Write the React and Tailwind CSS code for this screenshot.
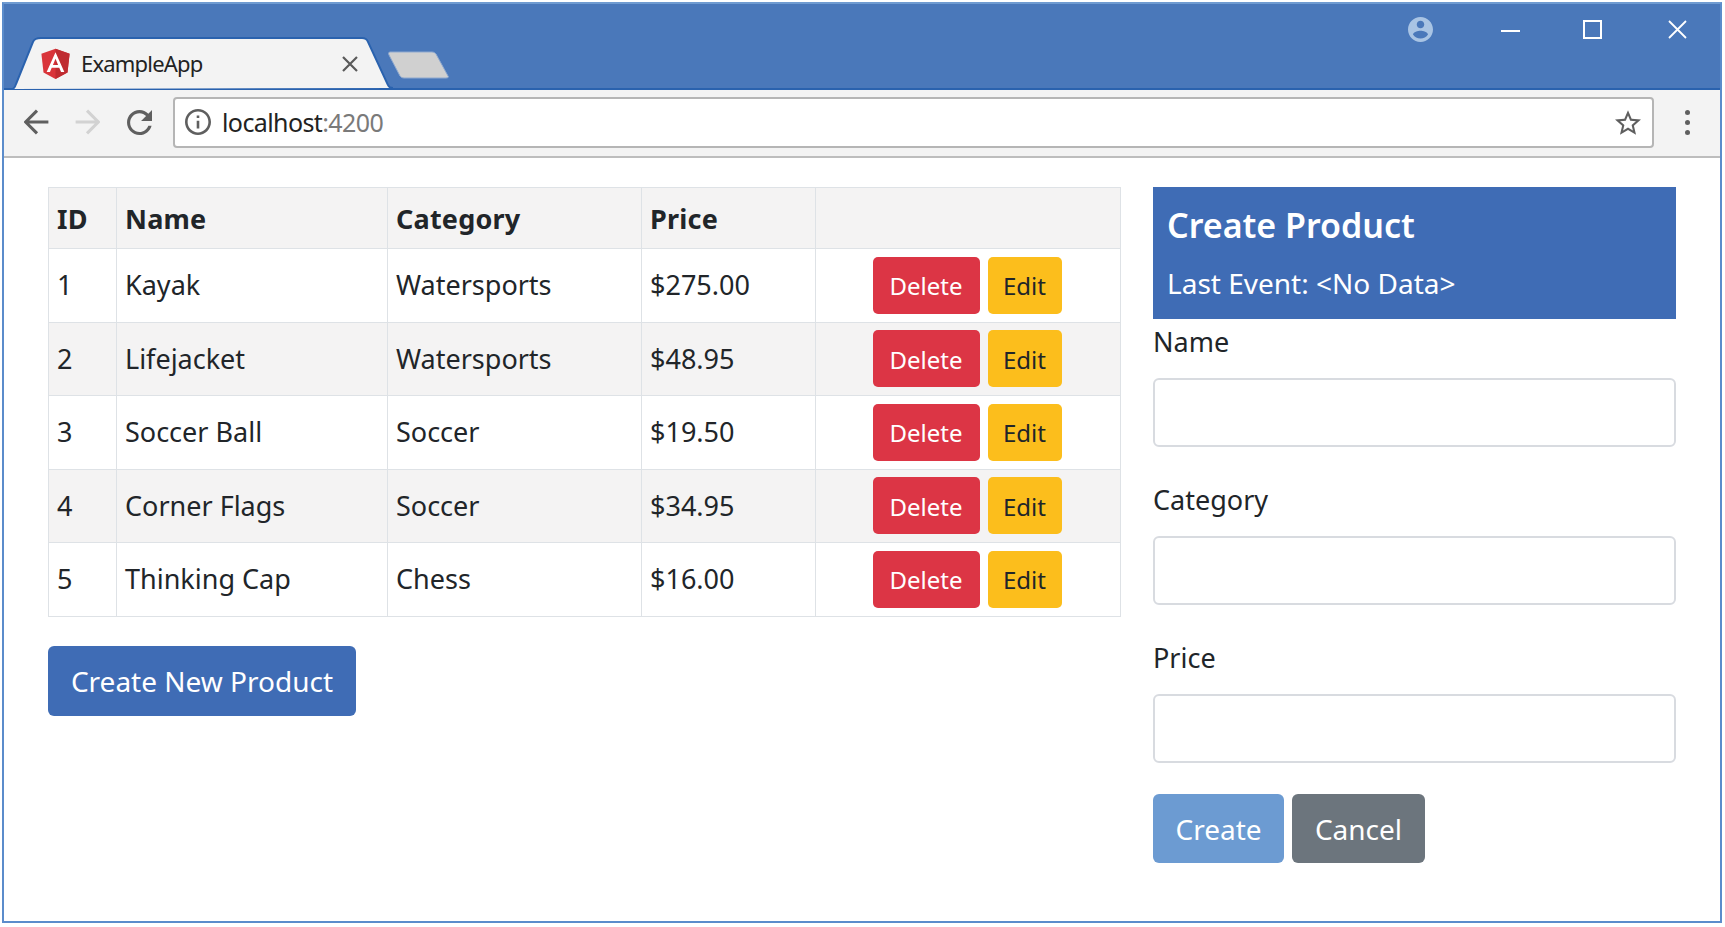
const products = [
    { id: 1, name: 'Kayak', category: 'Watersports', price: '$275.00' },
    { id: 2, name: 'Lifejacket', category: 'Watersports', price: '$48.95' },
    { id: 3, name: 'Soccer Ball', category: 'Soccer', price: '$19.50' },
    { id: 4, name: 'Corner Flags', category: 'Soccer', price: '$34.95' },
    { id: 5, name: 'Thinking Cap', category: 'Chess', price: '$16.00' },
];

const AngularLogo = () => (
    <svg viewBox="15 8 220 235" className="w-[29px] h-[32px] shrink-0">
        <polygon fill="#d9343a" points="125,10 18,48 34,190 125,240 216,190 232,48" />
        <polygon fill="#bf2b30" points="125,10 125,240 216,190 232,48" />
        <path fill="#fff" d="M125 37 58 187h25l13.500-33.500h57L167 187h25L125 37zm19.600 96h-39.200L125 86l19.600 47z" />
    </svg>
);

const TitleBar = () => (
    <div className="flex h-[86px] shrink-0 bg-[#4a78ba] border-b-2 border-[#2a62ae] pl-[8px]">
        <div className="relative self-end w-[382px] h-[53px] -mb-[2px] flex items-center pl-[29px] pr-[36px]">
            <svg viewBox="0 0 382 53" className="absolute inset-0 w-full h-full">
                <path d="M0 52 C2 52 3 50 4 47 L21 5 C22 2 25 1 29 1 H350 C353 1 355 2 356 5 L376 48 C377 51 379 51 381 51" fill="#f3f3f3" stroke="#2a62ae" strokeWidth="2" />
            </svg>
            <div className="relative flex items-center w-full">
                <AngularLogo />
                <span className="ml-[11px] text-[22px] text-[#222] tracking-[-0.8px]">ExampleApp</span>
                <svg viewBox="0 0 16 16" className="ml-auto w-[16px] h-[16px]" stroke="#5a5a5a" strokeWidth="2.200">
                    <path d="M1 1 15 15M15 1 1 15" />
                </svg>
            </div>
        </div>
        <div className="self-end mb-[9px] -ml-[6px]">
            <svg viewBox="0 0 62 29" className="w-[62px] h-[29px]">
                <path d="M2 2 H44 C46 2 47 3 48 4 L60 26 C61 27 60 28 58 28 H16 C14 28 13 27 12 26 L1 5 C0 3 1 2 2 2Z" fill="#d0d0d0" stroke="#8fa9cf" strokeWidth="1" />
            </svg>
        </div>
        <div className="ml-auto flex items-start pt-[13px] pr-[33px]">
            <svg viewBox="2 2 20 20" className="w-[25px] h-[25px] mr-[68px]" fill="#a9c4e4">
                <path d="M12 2C6.480 2 2 6.480 2 12s4.480 10 10 10 10-4.480 10-10S17.520 2 12 2zm0 3c1.660 0 3 1.340 3 3s-1.340 3-3 3-3-1.340-3-3 1.340-3 3-3zm0 14.200c-2.500 0-4.710-1.280-6-3.220.030-1.990 4-3.080 6-3.080 1.990 0 5.970 1.090 6 3.080-1.290 1.940-3.500 3.220-6 3.220z" />
            </svg>
            <div className="w-[19px] h-[2px] bg-white mt-[13px] mr-[63px]" />
            <div className="w-[19px] h-[19px] border-2 border-white mt-[3px] mr-[66px]" />
            <svg viewBox="0 0 19 19" className="w-[19px] h-[19px] mt-[3px]" stroke="#fff" strokeWidth="1.800">
                <path d="M1 1 18 18M18 1 1 18" />
            </svg>
        </div>
    </div>
);

const Toolbar = () => (
    <div className="flex items-center h-[68px] shrink-0 bg-[#f3f3f3] border-b-2 border-[#bdbdbd] pl-[20px] pb-[2px]">
        <svg viewBox="4 4 16 16" className="w-[26px] h-[26px]" fill="none" stroke="#5f5f5f" strokeWidth="1.900">
            <path d="M19 12H5M12 19l-7-7 7-7" />
        </svg>
        <svg viewBox="4 4 16 16" className="w-[26px] h-[26px] ml-[24px]" fill="none" stroke="#d2d2d2" strokeWidth="1.900">
            <path d="M5 12h14M12 5l7 7-7 7" />
        </svg>
        <svg viewBox="4 4 16 16" className="w-[25px] h-[25px] ml-[27px]" fill="#5f5f5f">
            <path d="M17.650 6.350C16.200 4.900 14.210 4 12 4c-4.420 0-7.990 3.580-7.990 8s3.570 8 7.990 8c3.730 0 6.840-2.550 7.730-6h-2.080c-.82 2.330-3.040 4-5.650 4-3.310 0-6-2.690-6-6s2.690-6 6-6c1.660 0 3.140.69 4.220 1.780L13 11h7V4l-2.350 2.350z" />
        </svg>
        <div className="flex items-center w-[1481px] h-[51px] ml-[21px] bg-white border-2 border-[#b5b5b5] rounded-[4px] pl-[10px] pr-[11px]">
            <svg viewBox="2 2 20 20" className="w-[26px] h-[26px]" fill="#5f5f5f">
                <path d="M11 7h2v2h-2zm0 4h2v6h-2zm1-9C6.480 2 2 6.480 2 12s4.480 10 10 10 10-4.480 10-10S17.520 2 12 2zm0 18c-4.410 0-8-3.590-8-8s3.590-8 8-8 8 3.590 8 8-3.590 8-8 8z" />
            </svg>
            <span className="ml-[11px] pt-[2px] text-[25px] text-[#222] tracking-[-0.6px]">
                localhost<span className="text-[#7a7a7a]">:4200</span>
            </span>
            <svg viewBox="2 2 20 19" className="ml-auto w-[26px] h-[25px]" fill="#5f5f5f">
                <path d="M22 9.240l-7.190-.62L12 2 9.190 8.630 2 9.240l5.460 4.730L5.820 21 12 17.270 18.180 21l-1.630-7.030L22 9.240zM12 15.400l-3.760 2.270 1-4.280-3.320-2.880 4.380-.38L12 6.100l1.710 4.040 4.380.38-3.320 2.880 1 4.280L12 15.400z" />
            </svg>
        </div>
        <div className="flex flex-col gap-[5px] ml-[31px]">
            <div className="w-[5px] h-[5px] rounded-full bg-[#5f5f5f]" />
            <div className="w-[5px] h-[5px] rounded-full bg-[#5f5f5f]" />
            <div className="w-[5px] h-[5px] rounded-full bg-[#5f5f5f]" />
        </div>
    </div>
);

const ProductTable = () => (
    <table className="w-[1073px] table-fixed border border-[#dee2e6] text-[27px] text-[#212529]">
        <colgroup>
            <col className="w-[68px]" />
            <col className="w-[271px]" />
            <col className="w-[254px]" />
            <col className="w-[174px]" />
            <col />
        </colgroup>
        <thead>
            <tr className="h-[61px] bg-[#f4f3f3] font-bold text-left tracking-[0.2px]">
                <th className="border border-[#dee2e6] pl-[8px] pt-[2px]">ID</th>
                <th className="border border-[#dee2e6] pl-[8px] pt-[2px]">Name</th>
                <th className="border border-[#dee2e6] pl-[8px] pt-[2px]">Category</th>
                <th className="border border-[#dee2e6] pl-[8px] pt-[2px]">Price</th>
                <th className="border border-[#dee2e6]"></th>
            </tr>
        </thead>
        <tbody>
            {products.map((p, i) => (
                <tr key={p.id} className={i % 2 === 1 ? 'h-[73.500px] bg-[#f4f3f3]' : 'h-[73.500px] bg-white'}>
                    <td className="border border-[#dee2e6] pl-[8px]">{p.id}</td>
                    <td className="border border-[#dee2e6] pl-[8px]">{p.name}</td>
                    <td className="border border-[#dee2e6] pl-[8px]">{p.category}</td>
                    <td className="border border-[#dee2e6] pl-[8px]">{p.price}</td>
                    <td className="border border-[#dee2e6]">
                        <div className="flex justify-center gap-[8px] pr-[2px]">
                            <button className="w-[107px] h-[57px] pt-[2px] rounded-[5px] bg-[#dc3545] text-white text-[24px]">Delete</button>
                            <button className="w-[74px] h-[57px] pt-[2px] rounded-[5px] bg-[#fcbe1c] text-[#212529] text-[24px]">Edit</button>
                        </div>
                    </td>
                </tr>
            ))}
        </tbody>
    </table>
);

const Field = ({ label, last }) => (
    <div className={last ? 'flex flex-col' : 'flex flex-col mb-[33px]'}>
        <label className="text-[27px] leading-[40px] mb-[16px] text-[#212529]">{label}</label>
        <input className="w-full h-[69px] bg-white border-2 border-[#d8dbe0] rounded-[6px]" />
    </div>
);

export default function App() {
    return (
        <div className="w-[1725px] h-[927px] bg-white pt-[2px] pl-[2px] font-['Noto_Sans',sans-serif]">
            <div className="flex flex-col w-[1720px] h-[921px] border-2 border-[#5b8ccb] border-t-[#6f9bd1]">
                <TitleBar />
                <Toolbar />
                <div className="flex flex-1 pl-[44px] pt-[29px] gap-[32px]">
                    <div className="w-[1073px]">
                        <ProductTable />
                        <button className="mt-[29px] w-[308px] h-[70px] rounded-[6px] bg-[#3f6cb5] text-white text-[28px]">Create New Product</button>
                    </div>
                    <div className="w-[523px]">
                        <div className="h-[132px] bg-[#3f6cb5] text-white px-[14px] pt-[15px]">
                            <div className="text-[34px] leading-[46px] font-semibold">Create Product</div>
                            <div className="text-[28px] leading-[38px] mt-[16px]">Last Event: &lt;No Data&gt;</div>
                        </div>
                        <div className="pt-[3px]">
                            <Field label="Name" />
                            <Field label="Category" />
                            <Field label="Price" last />
                        </div>
                        <div className="flex gap-[8px] mt-[31px]">
                            <button className="w-[131px] h-[69px] rounded-[6px] bg-[#6c9bd2] text-white text-[28px]">Create</button>
                            <button className="w-[133px] h-[69px] rounded-[6px] bg-[#6c757d] text-white text-[28px]">Cancel</button>
                        </div>
                    </div>
                </div>
            </div>
        </div>
    );
}
